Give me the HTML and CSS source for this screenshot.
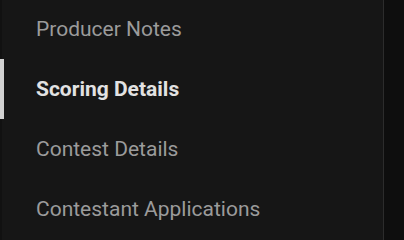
FILE: index.html
```html
<!DOCTYPE html>
<html>
<head>
<meta charset="utf-8">
<link rel="stylesheet" href="styles.css">
</head>
<body>
<div class="layout">
  <nav class="sidebar">
    <div class="item">Producer Notes</div>
    <div class="item active">Scoring Details</div>
    <div class="item">Contest Details</div>
    <div class="item">Contestant Applications</div>
  </nav>
  <div class="main"></div>
</div>
</body>
</html>
```
FILE: styles.css
```css
html, body {
  margin: 0;
  padding: 0;
  background: #0e0e0e;
  height: 100%;
  overflow: hidden;
}
.layout {
  display: flex;
  height: 240px;
}
.sidebar {
  width: 383px;
  background: #161616;
  border-right: 1px solid #2c2c2c;
  box-shadow: inset 2px 0 0 #111111;
  display: flex;
  flex-direction: column;
  margin-top: -1px;
  height: 246px;
}
.main {
  flex: 1;
  background: #0e0e0e;
}
.item {
  height: 60px;
  display: flex;
  align-items: center;
  padding-left: 36px;
  font-family: Roboto, "Noto Sans", sans-serif;
  font-size: 21px;
  color: #9b9b9b;
  position: relative;
}
.item.active {
  color: #e2e2e2;
  font-weight: 700;
}
.item.active::before {
  content: "";
  position: absolute;
  left: 0;
  top: 0;
  width: 4px;
  height: 60px;
  background: #d2d2d2;
}
```
